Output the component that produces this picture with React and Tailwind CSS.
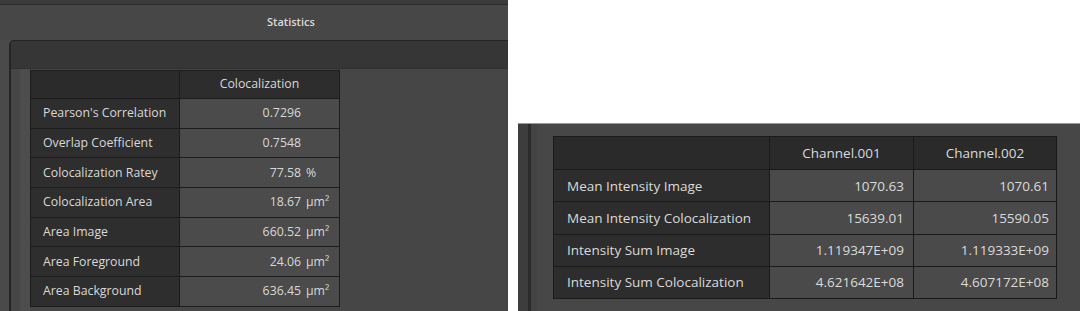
import React from "react";

const leftRows = [
  ["Pearson's Correlation", "0.7296", ""],
  ["Overlap Coefficient", "0.7548", ""],
  ["Colocalization Ratey", "77.58", "%"],
  ["Colocalization Area", "18.67", "μm²"],
  ["Area Image", "660.52", "μm²"],
  ["Area Foreground", "24.06", "μm²"],
  ["Area Background", "636.45", "μm²"],
];

const rightRows = [
  ["Mean Intensity Image", "1070.63", "1070.61"],
  ["Mean Intensity Colocalization", "15639.01", "15590.05"],
  ["Intensity Sum Image", "1.119347E+09", "1.119333E+09"],
  ["Intensity Sum Colocalization", "4.621642E+08", "4.607172E+08"],
];

const font = { fontFamily: '"Open Sans", "Noto Sans", sans-serif' };

export default function App() {
  return (
    <div className="flex w-[1080px] h-[311px] bg-white overflow-hidden" style={font}>
      {/* Left panel */}
      <div className="w-[508px] h-[311px] bg-[#474747] flex flex-col shrink-0">
        <div className="h-[4px] bg-[#3b3b3b]" />
        <div className="h-[1px] bg-[#2c2c2c]" />
        <div className="h-[35px] flex items-center pl-[267px] text-[11px] font-semibold text-[#dadada]">
          Statistics
        </div>
        <div className="flex-1 flex pl-[9px] bg-[#4a4a4a]">
          <div className="flex-1 flex flex-col border-l-2 border-t border-[#252525] rounded-tl-[5px] bg-[#464646] overflow-hidden">
            <div className="h-[27px] bg-[#363636]" />
            <div className="h-[1px] bg-[#303030]" />
            <div className="flex-1 flex">
              <div className="w-[9px]" />
              <div className="w-[10px] bg-[#4d4d4d]" />
              <div className="pt-[1px]">
                <div className="grid grid-cols-[148px_159px] grid-rows-[27px_repeat(7,28.7px)] gap-px p-px bg-[#1c1c1c] text-[12.3px] text-[#d8d8d8]">
                  <div className="bg-[#2b2b2b]" />
                  <div className="bg-[#2d2d2d] flex items-center justify-center">Colocalization</div>
                  {leftRows.map(([label, val, unit]) => (
                    <React.Fragment key={label}>
                      <div className="bg-[#2e2e2e] flex items-center pl-[12px] whitespace-nowrap">{label}</div>
                      <div className="bg-[#4b4b4b] flex items-center justify-end pr-[5px]">
                        <span>{val}</span>
                        <span className="w-[33px] pl-[5px] text-left">{unit}</span>
                      </div>
                    </React.Fragment>
                  ))}
                </div>
              </div>
            </div>
          </div>
        </div>
      </div>

      {/* Right region */}
      <div className="flex-1 flex flex-col bg-white">
        <div className="h-[123px]" />
        <div className="flex-1 flex ml-[10px] border-t border-[#9a9a9a] bg-[#474747]">
          <div className="w-[10px] bg-[#3d3d3d]" />
          <div className="w-[3px] bg-[#2b2b2b]" />
          <div className="w-[6px] bg-[#434343]" />
          <div className="pl-[16px] pt-[12px]">
            <div className="grid grid-cols-[215px_143px_142px] grid-rows-[32px_repeat(4,31.25px)] gap-px p-px bg-[#1a1a1a] text-[13.5px] text-[#dadada]">
              <div className="bg-[#2a2a2a]" />
              <div className="bg-[#2a2a2a] flex items-center justify-center">Channel.001</div>
              <div className="bg-[#2a2a2a] flex items-center justify-center">Channel.002</div>
              {rightRows.map(([label, a, b]) => (
                <React.Fragment key={label}>
                  <div className="bg-[#2d2d2d] flex items-center pl-[13px] whitespace-nowrap">{label}</div>
                  <div className="bg-[#4a4a4a] flex items-center justify-end pr-[9px]">{a}</div>
                  <div className="bg-[#4a4a4a] flex items-center justify-end pr-[7px]">{b}</div>
                </React.Fragment>
              ))}
            </div>
          </div>
        </div>
      </div>
    </div>
  );
}
